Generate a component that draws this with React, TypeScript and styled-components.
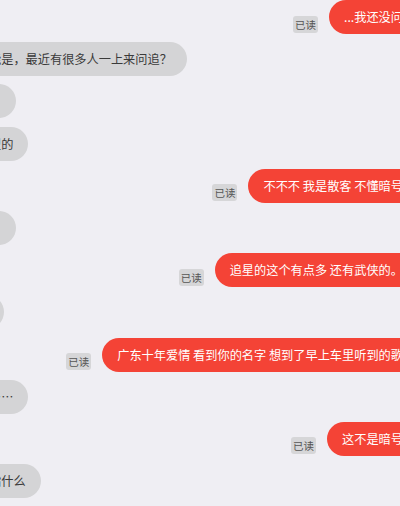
import React from 'react'
import styled, { createGlobalStyle } from 'styled-components'

const GlobalStyle = createGlobalStyle`
  html, body {
    margin: 0;
    padding: 0;
    overflow: hidden;
    background: #efeef3;
  }
  body {
    font-family: "Noto Sans CJK SC", "Noto Sans", sans-serif;
  }
`

// the chat column is wider than the window, both sides run off the edges
const ChatView = styled.div`
  box-sizing: border-box;
  width: 602px;
  margin-left: -172px;
  padding: 0 12px;
  display: flex;
  flex-direction: column;
  gap: 8.2px;
`

const Row = styled.div<{ $out?: boolean }>`
  display: flex;
  align-items: flex-end;
  justify-content: ${({ $out }) => ($out ? 'flex-end' : 'flex-start')};
  gap: 11px;
`

const Bubble = styled.div<{ $out?: boolean }>`
  flex-shrink: 0;
  box-sizing: border-box;
  height: 34px;
  padding: 0 15px;
  border-radius: 17px;
  display: flex;
  align-items: center;
  white-space: nowrap;
  font-size: 12.2px;
  background: ${({ $out }) => ($out ? '#f44336' : '#d4d4d6')};
  color: ${({ $out }) => ($out ? '#ffffff' : '#3a3a3a')};
`

const ReadTag = styled.span`
  flex-shrink: 0;
  box-sizing: border-box;
  width: 25px;
  height: 17px;
  margin-bottom: 1.5px;
  border-radius: 3px;
  background: #d6d6d8;
  color: #555555;
  font-size: 10.5px;
  line-height: 17px;
  text-align: center;
`

type Message = { out: boolean; text: string }

const messages: Message[] = [
  { out: true, text: '...我还没问' },
  { out: false, text: '哈哈，你问的这个问题可能是，最近有很多人一上来问追？' },
  { out: false, text: '你是想要追星的那种是吧。' },
  { out: false, text: '还是说你想听一些别的类型的' },
  { out: true, text: '不不不 我是散客 不懂暗号' },
  { out: false, text: '那你平时都喜欢听什么歌。' },
  { out: true, text: '追星的这个有点多 还有武侠的。' },
  { out: false, text: '我都可以听听看你推荐吧' },
  { out: true, text: '广东十年爱情 看到你的名字 想到了早上车里听到的歌' },
  { out: false, text: '原来是这样子啊，那好吧……' },
  { out: true, text: '这不是暗号' },
  { out: false, text: '那你说的那个暗号到底是指什么' },
]

const App = () => {
  return (
    <>
      <GlobalStyle />
      <ChatView>
        {messages.map((m, i) => (
          <Row key={i} $out={m.out}>
            {m.out && <ReadTag>已读</ReadTag>}
            <Bubble $out={m.out}>{m.text}</Bubble>
          </Row>
        ))}
      </ChatView>
    </>
  )
}

export default App
